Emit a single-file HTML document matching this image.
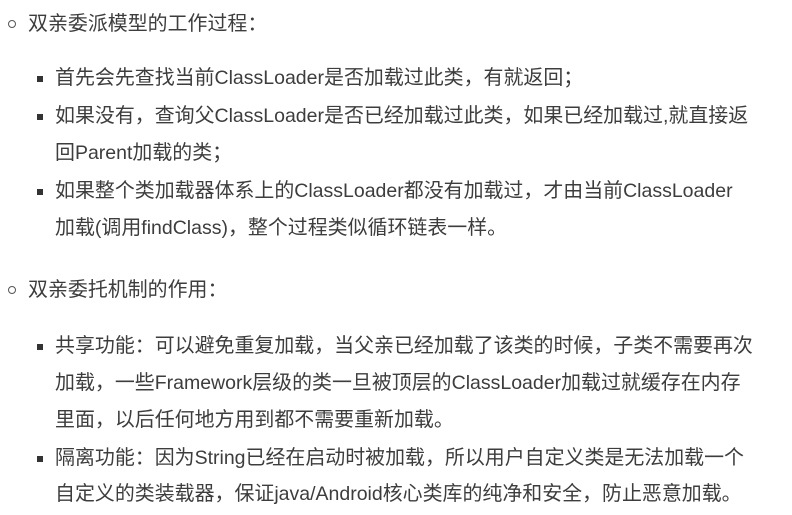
<!DOCTYPE html>
<html><head><meta charset="utf-8"><style>
body{margin:0;width:792px;height:515px;background:#fff;overflow:hidden;position:relative;font-family:"Liberation Sans","Noto Sans CJK SC",sans-serif;font-size:19.95px;color:#3d3d3d}
.l{position:absolute;white-space:nowrap;line-height:24px}
i{font-style:normal;font-size:19.5px}
.c{position:absolute;width:6px;height:6px;border:1.3px solid #555;border-radius:50%}
.s{position:absolute;width:6px;height:6px;background:#333}
</style></head><body>
<div class="c" style="left:8px;top:20px"></div>
<div class="l" style="left:28px;top:12px">双亲委派模型的工作过程：</div>
<div class="s" style="left:37px;top:76px"></div>
<div class="l" style="left:55px;top:66px">首先会先查找当前<i>ClassLoader</i>是否加载过此类，有就返回；</div>
<div class="s" style="left:37px;top:114px"></div>
<div class="l" style="left:55px;top:104px">如果没有，查询父<i>ClassLoader</i>是否已经加载过此类，如果已经加载过<i>,</i>就直接返</div>
<div class="l" style="left:55px;top:141px">回<i>Parent</i>加载的类；</div>
<div class="s" style="left:37px;top:189px"></div>
<div class="l" style="left:55px;top:179px">如果整个类加载器体系上的<i>ClassLoader</i>都没有加载过，才由当前<i>ClassLoader</i></div>
<div class="l" style="left:55px;top:216px">加载<i>(</i>调用<i>findClass)</i>，整个过程类似循环链表一样。</div>
<div class="c" style="left:8px;top:286px"></div>
<div class="l" style="left:28px;top:278px">双亲委托机制的作用：</div>
<div class="s" style="left:37px;top:344px"></div>
<div class="l" style="left:55px;top:334px">共享功能：可以避免重复加载，当父亲已经加载了该类的时候，子类不需要再次</div>
<div class="l" style="left:55px;top:371px">加载，一些<i>Framework</i>层级的类一旦被顶层的<i>ClassLoader</i>加载过就缓存在内存</div>
<div class="l" style="left:55px;top:408px">里面，以后任何地方用到都不需要重新加载。</div>
<div class="s" style="left:37px;top:456px"></div>
<div class="l" style="left:55px;top:446px">隔离功能：因为<i>String</i>已经在启动时被加载，所以用户自定义类是无法加载一个</div>
<div class="l" style="left:55px;top:482px">自定义的类装载器，保证<i>java/Android</i>核心类库的纯净和安全，防止恶意加载。</div>
</body></html>
